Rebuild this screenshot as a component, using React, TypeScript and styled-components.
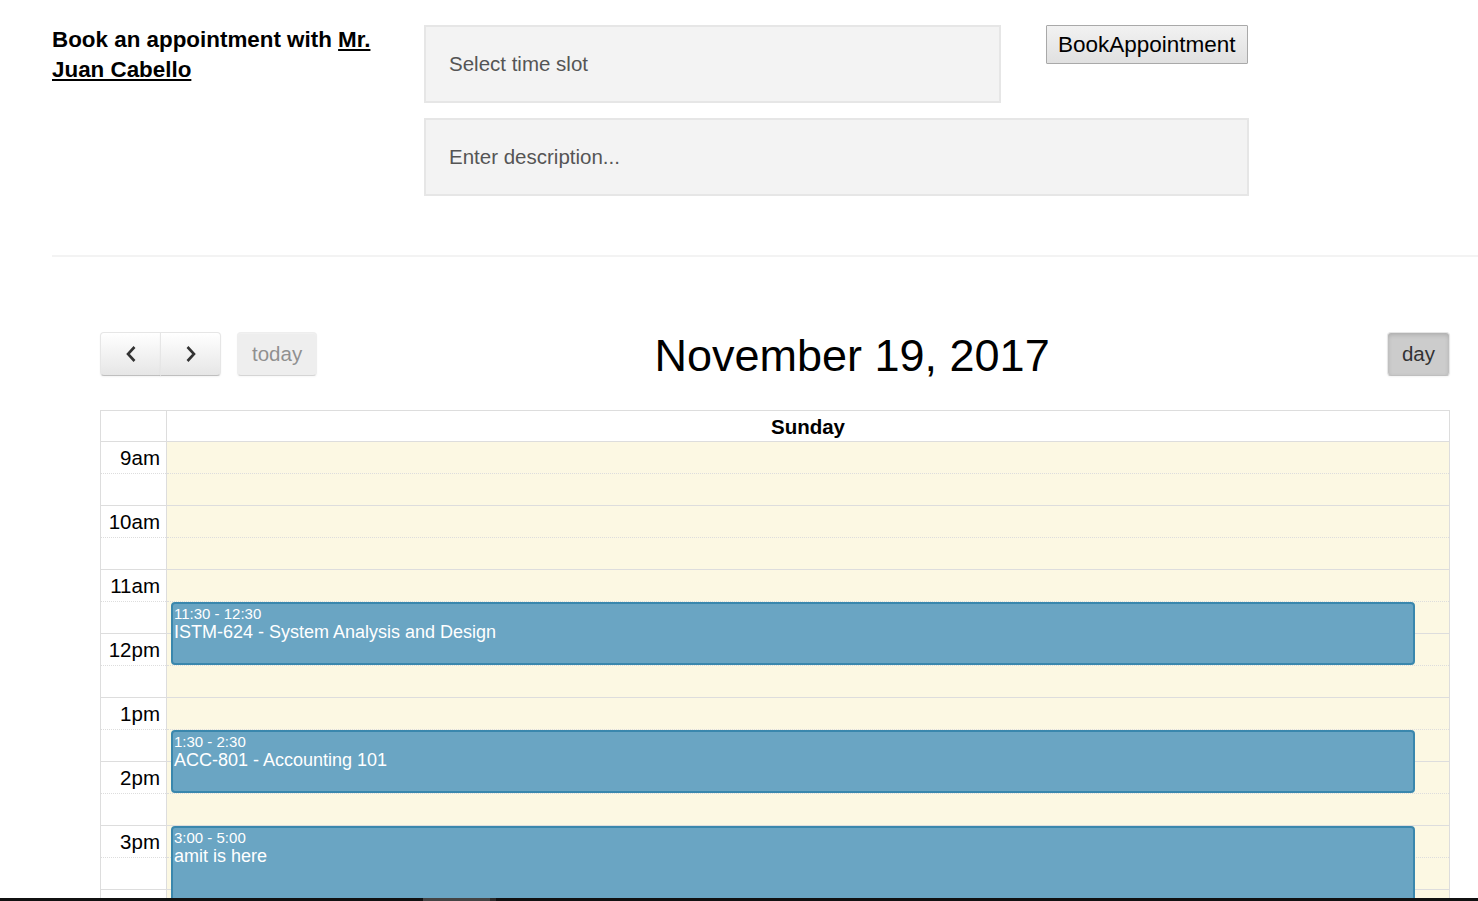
import React from 'react'
import styled, { createGlobalStyle } from 'styled-components'

const GlobalStyle = createGlobalStyle`
  html, body {
    margin: 0;
    padding: 0;
    background: #fff;
    overflow: hidden;
  }
  body {
    font-family: "Liberation Sans", Arial, sans-serif;
    color: #000;
  }
`

const Page = styled.div`
  padding-top: 24px;
`

const BookingSection = styled.section`
  display: grid;
  grid-template-columns: 372px 824px;
  padding-left: 52px;
`

const Heading = styled.h3`
  margin: 0;
  padding-top: 1px;
  padding-right: 28px;
  font-size: 22.4px;
  line-height: 30px;
  font-weight: bold;

  a {
    color: #000;
    text-decoration: underline;
  }
`

const Form = styled.div`
  display: flex;
  flex-direction: column;
  gap: 15px;
  padding-top: 1px;
`

const FormRow = styled.div`
  display: flex;
  align-items: flex-start;
  gap: 45px;
`

const TextInput = styled.input<{ $width: number }>`
  box-sizing: border-box;
  width: ${(p) => p.$width}px;
  height: 78px;
  padding: 0 23px;
  background: #f3f3f3;
  border: 2px solid #e6e6e6;
  font-family: "Liberation Sans", Arial, sans-serif;
  font-size: 20.5px;
  color: #333;
  outline: none;

  &::placeholder {
    color: #555;
  }
`

const BookButton = styled.button`
  box-sizing: border-box;
  height: 39px;
  padding: 0 11px;
  background: linear-gradient(#f2f2f2, #e0e0e0);
  border: 1px solid #a9a9a9;
  border-radius: 1px;
  font-family: "Liberation Sans", Arial, sans-serif;
  font-size: 22.5px;
  color: #000;
`

const Divider = styled.hr`
  margin: 59px 0 0 52px;
  border: 0;
  border-top: 2px solid #f3f3f3;
`

const Calendar = styled.div`
  width: 1350px;
  margin: 75px 0 0 100px;
`

const Toolbar = styled.div`
  display: flex;
  align-items: center;
  height: 44px;
  margin-bottom: 34px;
`

const ToolbarSide = styled.div`
  display: flex;
  align-items: center;
  gap: 16px;
`

const Title = styled.h2`
  flex: 1;
  margin: 0;
  text-align: center;
  font-size: 45px;
  font-weight: normal;
  line-height: 44px;
  padding-top: 3px;
`

const ButtonGroup = styled.div`
  display: flex;
`

const FcButton = styled.button<{ $active?: boolean; $disabled?: boolean; $pos?: 'left' | 'right' }>`
  box-sizing: border-box;
  display: flex;
  align-items: center;
  justify-content: center;
  height: 44px;
  min-width: ${(p) => (p.$pos ? '61px' : '62px')};
  padding: 0 14px;
  font-family: "Liberation Sans", Arial, sans-serif;
  font-size: 20.5px;
  color: #333;
  border: 1px solid;
  border-color: #e6e6e6 #e6e6e6 #bfbfbf;
  border-radius: ${(p) =>
    p.$pos === 'left' ? '4px 0 0 4px' : p.$pos === 'right' ? '0 4px 4px 0' : '4px'};
  margin-left: ${(p) => (p.$pos === 'right' ? '-1px' : '0')};
  background: ${(p) => (p.$active ? '#cccccc' : 'linear-gradient(#ffffff, #e6e6e6)')};
  box-shadow: ${(p) =>
    p.$active
      ? 'inset 0 2px 4px rgba(0,0,0,.15), 0 1px 2px rgba(0,0,0,.05)'
      : 'inset 0 1px 0 rgba(255,255,255,.2), 0 1px 2px rgba(0,0,0,.05)'};
  opacity: ${(p) => (p.$disabled ? 0.65 : 1)};
  ${(p) => (p.$disabled ? 'background: #e6e6e6; color: #555;' : '')}
`

const Grid = styled.div`
  border: 1px solid #ddd;
  border-bottom: 0;
`

const HeadRow = styled.div`
  display: grid;
  grid-template-columns: 66px 1fr;
  height: 30px;
  border-bottom: 1px solid #ddd;
`

const HeadAxis = styled.div`
  border-right: 1px solid #ddd;
`

const HeadDay = styled.div`
  display: flex;
  align-items: center;
  justify-content: center;
  padding-top: 1px;
  font-size: 20.5px;
  font-weight: bold;
`

const Body = styled.div`
  display: grid;
  grid-template-columns: 66px 1fr;
`

const AxisColumn = styled.div`
  border-right: 1px solid #ddd;
`

const AxisCell = styled.div<{ $minor: boolean }>`
  box-sizing: border-box;
  height: 32px;
  padding-right: 6px;
  border-bottom: 1px ${(p) => (p.$minor ? 'solid #ddd' : 'dotted #ddd')};
  text-align: right;
  font-size: 20.5px;
  line-height: 32px;
  white-space: nowrap;
`

const DayColumn = styled.div`
  position: relative;
  background: #fcf8e3;
`

const Slot = styled.div<{ $minor: boolean }>`
  box-sizing: border-box;
  height: 32px;
  border-bottom: 1px ${(p) => (p.$minor ? 'solid #ddd' : 'dotted #ddd')};
`

const EventLayer = styled.div`
  position: absolute;
  top: 0;
  bottom: 0;
  left: 4px;
  right: 34px;
`

const Event = styled.div`
  position: absolute;
  left: 0;
  right: 0;
  box-sizing: border-box;
  padding: 1px 1px;
  background: #6aa5c3;
  border: 2px solid #3a87ad;
  border-radius: 4px;
  color: #fff;
`

const EventTime = styled.div`
  font-size: 15px;
  line-height: 17px;
`

const EventTitle = styled.div`
  font-size: 18px;
  line-height: 21px;
`

const BottomBar = styled.div`
  position: fixed;
  left: 0;
  right: 0;
  bottom: 0;
  height: 3px;
  display: flex;
  background: #111;
`

const BarGap = styled.div<{ $w: number; $c: string }>`
  width: ${(p) => p.$w}px;
  background: ${(p) => p.$c};
`

const Chevron = ({ dir }: { dir: 'left' | 'right' }) => (
  <svg width="12" height="18" viewBox="0 0 12 18">
    <path
      d={dir === 'left' ? 'M9.5 2 L3 9 L9.5 16' : 'M2.5 2 L9 9 L2.5 16'}
      fill="none"
      stroke="#333"
      strokeWidth="2.6"
    />
  </svg>
)

const HOUR_PX = 64
const START_HOUR = 9
const hours = [9, 10, 11, 12, 13, 14, 15, 16, 17, 18]

const label = (h: number) => (h < 12 ? `${h}am` : h === 12 ? '12pm' : `${h - 12}pm`)

const events = [
  { start: 11.5, end: 12.5, time: '11:30 - 12:30', title: 'ISTM-624 - System Analysis and Design' },
  { start: 13.5, end: 14.5, time: '1:30 - 2:30', title: 'ACC-801 - Accounting 101' },
  { start: 15, end: 17, time: '3:00 - 5:00', title: 'amit is here' },
]

const App: React.FC = () => {
  const slots = hours.flatMap((h) => [
    { key: `${h}-0`, text: label(h), minor: false },
    { key: `${h}-30`, text: '', minor: true },
  ])

  return (
    <Page>
      <GlobalStyle />
      <BookingSection>
        <Heading>
          Book an appointment with <a href="#">Mr. Juan Cabello</a>
        </Heading>
        <Form>
          <FormRow>
            <TextInput $width={577} placeholder="Select time slot" />
            <BookButton>BookAppointment</BookButton>
          </FormRow>
          <TextInput $width={825} placeholder="Enter description..." />
        </Form>
      </BookingSection>

      <Divider />

      <Calendar>
        <Toolbar>
          <ToolbarSide>
            <ButtonGroup>
              <FcButton $pos="left">
                <Chevron dir="left" />
              </FcButton>
              <FcButton $pos="right">
                <Chevron dir="right" />
              </FcButton>
            </ButtonGroup>
            <FcButton $disabled>today</FcButton>
          </ToolbarSide>
          <Title>November 19, 2017</Title>
          <ToolbarSide>
            <FcButton $active>day</FcButton>
          </ToolbarSide>
        </Toolbar>

        <Grid>
          <HeadRow>
            <HeadAxis />
            <HeadDay>Sunday</HeadDay>
          </HeadRow>
          <Body>
            <AxisColumn>
              {slots.map((s) => (
                <AxisCell key={s.key} $minor={s.minor}>
                  {s.text}
                </AxisCell>
              ))}
            </AxisColumn>
            <DayColumn>
              {slots.map((s) => (
                <Slot key={s.key} $minor={s.minor} />
              ))}
              <EventLayer>
                {events.map((e) => (
                  <Event
                    key={e.time}
                    style={{
                      top: (e.start - START_HOUR) * HOUR_PX,
                      height: (e.end - e.start) * HOUR_PX - 1,
                    }}
                  >
                    <EventTime>{e.time}</EventTime>
                    <EventTitle>{e.title}</EventTitle>
                  </Event>
                ))}
              </EventLayer>
            </DayColumn>
          </Body>
        </Grid>
      </Calendar>

      <BottomBar>
        <BarGap $w={423} $c="#111" />
        <BarGap $w={67} $c="#444" />
        <BarGap $w={6} $c="#2a2a2a" />
      </BottomBar>
    </Page>
  )
}

export default App
